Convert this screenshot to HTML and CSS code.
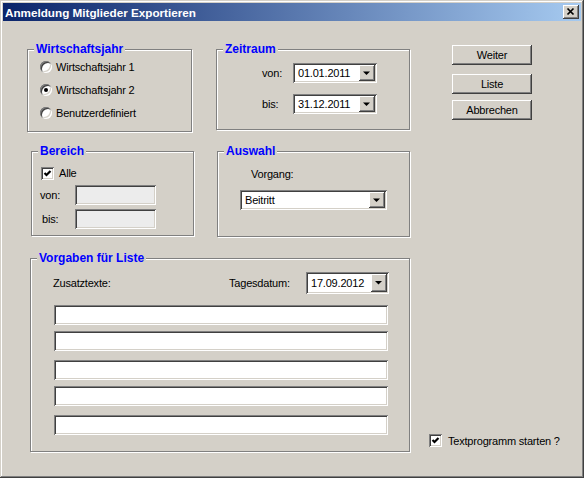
FILE: index.html
```html
<!DOCTYPE html>
<html lang="de">
<head>
    <meta charset="UTF-8">
    <title>Anmeldung Mitglieder Exportieren</title>
    <link rel="stylesheet" href="styles.css">
</head>
<body>
    <div class="window">
        <div class="titlebar">
            <span class="title">Anmeldung Mitglieder Exportieren</span>
            <button class="close" title="Schließen">
                <svg width="16" height="14" viewBox="0 0 16 14"><path d="M4.5 3.5 L10.5 9.5 M10.5 3.5 L4.5 9.5" stroke="#000" stroke-width="1.7" fill="none"/></svg>
            </button>
        </div>

        <div class="client">
            <div class="row row-top">
                <fieldset class="group g-jahr">
                    <legend>Wirtschaftsjahr</legend>
                    <div class="opt"><span class="radio"></span>Wirtschaftsjahr 1</div>
                    <div class="opt"><span class="radio checked"></span>Wirtschaftsjahr 2</div>
                    <div class="opt"><span class="radio"></span>Benutzerdefiniert</div>
                </fieldset>

                <fieldset class="group g-zeit">
                    <legend>Zeitraum</legend>
                    <div class="field-row">
                        <span class="lbl">von:</span>
                        <div class="combo w-date">
                            <span class="val">01.01.2011</span>
                            <span class="drop"><svg width="16" height="16" viewBox="0 0 16 16"><polygon points="4,6.5 11,6.5 7.5,10" fill="#000"/></svg></span>
                        </div>
                    </div>
                    <div class="field-row">
                        <span class="lbl">bis:</span>
                        <div class="combo w-date">
                            <span class="val">31.12.2011</span>
                            <span class="drop"><svg width="16" height="16" viewBox="0 0 16 16"><polygon points="4,6.5 11,6.5 7.5,10" fill="#000"/></svg></span>
                        </div>
                    </div>
                </fieldset>

                <div class="buttons">
                    <button class="btn">Weiter</button>
                    <button class="btn btn-liste">Liste</button>
                    <button class="btn btn-abbr">Abbrechen</button>
                </div>
            </div>

            <div class="row row-mid">
                <fieldset class="group g-ber">
                    <legend>Bereich</legend>
                    <div class="chk-row">
                        <span class="chk"><svg width="13" height="13" viewBox="0 0 13 13"><polyline points="3.5,6 5.5,8 9.5,4" stroke="#000" stroke-width="2.2" fill="none"/></svg></span>
                        Alle
                    </div>
                    <div class="field-row">
                        <span class="lbl lbl-ber">von:</span>
                        <input class="text text-off" type="text">
                    </div>
                    <div class="field-row">
                        <span class="lbl lbl-ber lbl-bis">bis:</span>
                        <input class="text text-off" type="text">
                    </div>
                </fieldset>

                <fieldset class="group g-aus">
                    <legend>Auswahl</legend>
                    <div class="lbl-vorgang">Vorgang:</div>
                    <div class="combo w-vorgang">
                        <span class="val">Beitritt</span>
                        <span class="drop"><svg width="16" height="16" viewBox="0 0 16 16"><polygon points="4,6.5 11,6.5 7.5,10" fill="#000"/></svg></span>
                    </div>
                </fieldset>
            </div>

            <div class="row row-bottom">
                <fieldset class="group g-vorg">
                    <legend>Vorgaben für Liste</legend>
                    <div class="field-row head-row">
                        <span class="lbl lbl-zusatz">Zusatztexte:</span>
                        <span class="lbl lbl-tag">Tagesdatum:</span>
                        <div class="combo w-tag">
                            <span class="val">17.09.2012</span>
                            <span class="drop"><svg width="16" height="16" viewBox="0 0 16 16"><polygon points="4,7 11,7 7.5,10.5" fill="#000"/></svg></span>
                        </div>
                    </div>
                    <div class="texts">
                        <input class="text text-long" type="text">
                        <input class="text text-long" type="text">
                        <input class="text text-long" type="text">
                        <input class="text text-long" type="text">
                        <input class="text text-long" type="text">
                    </div>
                </fieldset>

                <div class="start-opt">
                    <span class="chk"><svg width="13" height="13" viewBox="0 0 13 13"><polyline points="3.5,6 5.5,8 9.5,4" stroke="#000" stroke-width="2.2" fill="none"/></svg></span>
                    Textprogramm starten ?
                </div>
            </div>
        </div>
    </div>
</body>
</html>
```

FILE: styles.css
```css
* {
    box-sizing: border-box;
}

html, body {
    margin: 0;
    padding: 0;
    background-color: #d4d0c8;
}

body {
    font-family: 'Liberation Sans', Arial, sans-serif;
    font-size: 11px;
    letter-spacing: -0.2px;
    color: #000;
}

.window {
    width: 584px;
    height: 478px;
    padding: 3px;
    background-color: #d4d0c8;
    box-shadow: inset -1px -1px 0 #404040, inset 1px 1px 0 #d4d0c8,
                inset -2px -2px 0 #808080, inset 2px 2px 0 #fff;
}

/* Titelleiste */
.titlebar {
    height: 18px;
    display: flex;
    align-items: center;
    padding: 0 2px;
    background: linear-gradient(to right, #0a246a, #a6caf0);
}

.title {
    color: #fff;
    font-weight: bold;
    font-size: 11.7px;
    letter-spacing: 0;
}

.close {
    margin-left: auto;
    width: 16px;
    height: 14px;
    padding: 0;
    border: none;
    display: flex;
    background-color: #d4d0c8;
    box-shadow: inset -1px -1px 0 #404040, inset 1px 1px 0 #fff,
                inset -2px -2px 0 #808080, inset 2px 2px 0 #d4d0c8;
}

/* Aufbau */
.client {
    display: flex;
    flex-direction: column;
}

.row {
    display: flex;
    align-items: flex-start;
}

.row-top {
    margin-top: 21px;
}

.row-mid {
    margin-top: 12px;
}

.row-bottom {
    margin-top: 14px;
    align-items: flex-end;
}

/* Gruppenrahmen */
.group {
    margin: 0;
    padding: 0;
    min-width: 0;
    border: 1px solid #808080;
    box-shadow: inset 1px 1px 0 #fff, 1px 1px 0 #fff;
}

.group legend {
    margin-left: 6px;
    padding: 0 2px;
    font-size: 12px;
    line-height: 14px;
    font-weight: bold;
    letter-spacing: 0;
    color: #0000ff;
    background-color: #d4d0c8;
}

.g-jahr {
    margin-left: 24px;
    width: 165px;
    height: 90px;
    padding-top: 3px;
}

.g-zeit {
    margin-left: 24px;
    width: 194px;
    height: 88px;
}

.g-ber {
    margin-left: 28px;
    width: 163px;
    height: 92px;
}

.g-aus {
    margin-left: 23px;
    width: 193px;
    height: 93px;
}

.g-vorg {
    margin-left: 27px;
    width: 380px;
    height: 201px;
}

/* Optionsfelder */
.opt {
    display: flex;
    align-items: center;
    height: 16px;
    margin-left: 12px;
}

.opt + .opt {
    margin-top: 7px;
}

.radio {
    position: relative;
    width: 12px;
    height: 12px;
    margin-right: 4px;
    border-radius: 50%;
    background-color: #fff;
    box-shadow: inset 1px 1px 0 #808080, inset -1px -1px 0 #fff,
                inset 2px 2px 0 #404040, inset -2px -2px 0 #d4d0c8;
}

.radio.checked::after {
    content: '';
    position: absolute;
    left: 4px;
    top: 4px;
    width: 4px;
    height: 4px;
    border-radius: 50%;
    background-color: #000;
}

.chk {
    display: flex;
    width: 13px;
    height: 13px;
    background-color: #fff;
    box-shadow: inset 1px 1px 0 #808080, inset -1px -1px 0 #fff,
                inset 2px 2px 0 #404040, inset -2px -2px 0 #d4d0c8;
}

.chk-row {
    display: flex;
    align-items: center;
    gap: 5px;
    height: 14px;
    margin-top: 8px;
    margin-left: 9px;
}

.start-opt {
    display: flex;
    align-items: center;
    gap: 6px;
    margin-left: 19px;
    margin-bottom: 5px;
}

/* Eingabefelder */
.field-row {
    display: flex;
    align-items: center;
    height: 20px;
}

.g-zeit .field-row {
    margin-left: 45px;
}

.g-zeit .field-row:first-of-type {
    margin-top: 7px;
}

.g-zeit .field-row + .field-row {
    margin-top: 11px;
}

.lbl {
    width: 31px;
}

.lbl-ber {
    width: 43px;
    padding-left: 8px;
}

.lbl-bis {
    padding-left: 10px;
}

.g-ber .field-row {
    margin-top: 5px;
}

.g-ber .field-row + .field-row {
    margin-top: 4px;
}

.text {
    height: 20px;
    padding: 0 3px;
    border: none;
    outline: none;
    font: inherit;
    background-color: #fff;
    box-shadow: inset 1px 1px 0 #808080, inset -1px -1px 0 #fff,
                inset 2px 2px 0 #404040, inset -2px -2px 0 #d4d0c8;
}

.text-off {
    width: 81px;
    background-color: #ececec;
}

.combo {
    display: flex;
    height: 20px;
    padding: 2px;
    background-color: #fff;
    box-shadow: inset 1px 1px 0 #808080, inset -1px -1px 0 #fff,
                inset 2px 2px 0 #404040, inset -2px -2px 0 #d4d0c8;
}

.combo .val {
    flex: 1;
    padding-left: 3px;
    line-height: 16px;
}

.combo .drop {
    display: flex;
    width: 16px;
    background-color: #d4d0c8;
    box-shadow: inset -1px -1px 0 #404040, inset 1px 1px 0 #fff,
                inset -2px -2px 0 #808080, inset 2px 2px 0 #d4d0c8;
}

.w-date {
    width: 84px;
}

.lbl-vorgang {
    margin-top: 9px;
    padding-left: 33px;
    line-height: 14px;
}

.w-vorgang {
    width: 147px;
    margin-top: 9px;
    margin-left: 22px;
}

.head-row {
    height: 22px;
    margin-top: 7px;
}

.lbl-zusatz {
    width: 198px;
    padding-left: 22px;
}

.lbl-tag {
    width: 77px;
}

.w-tag {
    width: 83px;
    height: 22px;
}

.w-tag .val {
    line-height: 18px;
}

.texts {
    display: flex;
    flex-direction: column;
    margin-left: 23px;
}

.text-long {
    width: 334px;
    margin-top: 6px;
}

.text-long:first-child {
    margin-top: 11px;
}

.text-long:nth-child(3),
.text-long:nth-child(5) {
    margin-top: 9px;
}

/* Schaltflächen */
.buttons {
    display: flex;
    flex-direction: column;
    margin-left: 42px;
    margin-top: 3px;
}

.btn {
    width: 80px;
    height: 20px;
    padding: 0;
    border: none;
    font: inherit;
    letter-spacing: inherit;
    color: #000;
    background-color: #d4d0c8;
    box-shadow: inset -1px -1px 0 #404040, inset 1px 1px 0 #fff,
                inset -2px -2px 0 #808080, inset 2px 2px 0 #d4d0c8;
}

.btn-liste {
    margin-top: 9px;
}

.btn-abbr {
    margin-top: 6px;
}
```
